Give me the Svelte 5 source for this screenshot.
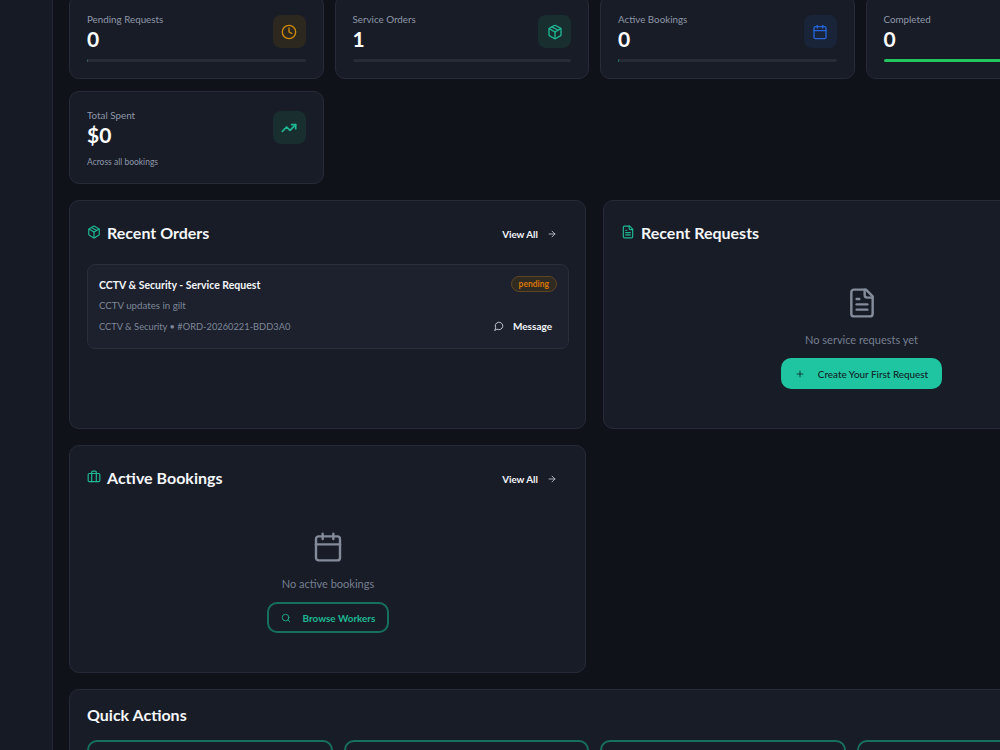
<script lang="ts">
  const stats = [
    { label: 'Pending Requests', value: '0', tone: 'amber', icon: 'clock', fill: 0.5 },
    { label: 'Service Orders', value: '1', tone: 'teal', icon: 'package', fill: 0 },
    { label: 'Active Bookings', value: '0', tone: 'blue', icon: 'calendar', fill: 0.5 },
    { label: 'Completed', value: '0', tone: 'green', icon: 'check', fill: 100 }
  ];
</script>

{#snippet icon(name: string)}
  <svg viewBox="0 0 24 24" fill="none" stroke="currentColor" stroke-width="2" stroke-linecap="round" stroke-linejoin="round" aria-hidden="true">
    {#if name === 'clock'}
      <circle cx="12" cy="12" r="10" /><path d="M12 6v6l4 2" />
    {:else if name === 'package'}
      <path d="M11 21.73a2 2 0 0 0 2 0l7-4A2 2 0 0 0 21 16V8a2 2 0 0 0-1-1.73l-7-4a2 2 0 0 0-2 0l-7 4A2 2 0 0 0 3 8v8a2 2 0 0 0 1 1.73z" /><path d="M12 22V12" /><path d="M3.29 7 12 12l8.71-5" /><path d="m7.5 4.27 9 5.15" />
    {:else if name === 'calendar'}
      <path d="M8 2v4" /><path d="M16 2v4" /><rect x="3" y="4" width="18" height="18" rx="2" /><path d="M3 10h18" />
    {:else if name === 'trending'}
      <path d="M22 7 13.5 15.5 8.5 10.5 2 17" stroke-width="2.6" /><path d="M16 7h6v6" stroke-width="2.6" />
    {:else if name === 'file'}
      <path d="M15 2H6a2 2 0 0 0-2 2v16a2 2 0 0 0 2 2h12a2 2 0 0 0 2-2V7z" /><path d="M14 2v4a2 2 0 0 0 2 2h4" /><path d="M10 9H8" /><path d="M16 13H8" /><path d="M16 17H8" />
    {:else if name === 'briefcase'}
      <path d="M16 20V4a2 2 0 0 0-2-2h-4a2 2 0 0 0-2 2v16" /><rect x="2" y="6" width="20" height="14" rx="2" />
    {:else if name === 'message'}
      <path d="M7.9 20A9 9 0 1 0 4 16.1L2 22z" />
    {:else if name === 'arrow'}
      <path d="M5 12h14" /><path d="m12 5 7 7-7 7" />
    {:else if name === 'plus'}
      <path d="M5 12h14" /><path d="M12 5v14" />
    {:else if name === 'search'}
      <circle cx="11" cy="11" r="8" /><path d="m21 21-4.3-4.3" />
    {:else if name === 'check'}
      <path d="M21.8 10A10 10 0 1 1 17 3.3" /><path d="m9 11 3 3L22 4" />
    {/if}
  </svg>
{/snippet}

<div class="shell">
  <aside class="sidebar"></aside>

  <main class="content">
    <section class="stats">
      {#each stats as s}
        <div class="card stat">
          <div class="stat-top">
            <div>
              <p class="stat-label">{s.label}</p>
              <p class="stat-value">{s.value}</p>
            </div>
            <span class="stat-icon {s.tone}">{@render icon(s.icon)}</span>
          </div>
          <div class="bar"><div class="bar-fill {s.tone}" style="width: {s.fill}%"></div></div>
        </div>
      {/each}

      <div class="card stat spent">
        <div class="stat-top">
          <div>
            <p class="stat-label">Total Spent</p>
            <p class="stat-value">$0</p>
          </div>
          <span class="stat-icon teal">{@render icon('trending')}</span>
        </div>
        <p class="stat-note">Across all bookings</p>
      </div>
    </section>

    <section class="panels">
      <div class="card panel">
        <header class="panel-head">
          <h2><span class="head-icon">{@render icon('package')}</span>Recent Orders</h2>
          <a class="view-all" href="#orders">View All <span class="arrow">{@render icon('arrow')}</span></a>
        </header>
        <div class="order">
          <div class="order-row">
            <h3>CCTV &amp; Security - Service Request</h3>
            <span class="badge">pending</span>
          </div>
          <p class="order-desc">CCTV updates in gilt</p>
          <div class="order-row meta">
            <span>CCTV &amp; Security • #ORD-20260221-BDD3A0</span>
            <button class="msg"><span class="msg-icon">{@render icon('message')}</span>Message</button>
          </div>
        </div>
      </div>

      <div class="card panel">
        <header class="panel-head">
          <h2><span class="head-icon">{@render icon('file')}</span>Recent Requests</h2>
        </header>
        <div class="empty requests">
          <span class="empty-icon">{@render icon('file')}</span>
          <p>No service requests yet</p>
          <button class="btn-solid"><span class="btn-icon">{@render icon('plus')}</span>Create Your First Request</button>
        </div>
      </div>

      <div class="card panel short">
        <header class="panel-head">
          <h2><span class="head-icon">{@render icon('briefcase')}</span>Active Bookings</h2>
          <a class="view-all" href="#bookings">View All <span class="arrow">{@render icon('arrow')}</span></a>
        </header>
        <div class="empty">
          <span class="empty-icon">{@render icon('calendar')}</span>
          <p>No active bookings</p>
          <button class="btn-outline"><span class="btn-icon">{@render icon('search')}</span>Browse Workers</button>
        </div>
      </div>
    </section>

    <section class="card quick">
      <h2>Quick Actions</h2>
      <div class="quick-grid">
        <div class="quick-item"></div>
        <div class="quick-item"></div>
        <div class="quick-item"></div>
        <div class="quick-item"></div>
      </div>
    </section>
  </main>
</div>

<style>
  :global(body) {
    margin: 0;
    background: #0f1219;
    overflow: hidden;
    font-family: Lato, "Noto Sans", sans-serif;
  }

  .shell {
    display: flex;
    width: 1136px;
    height: 750px;
    overflow: hidden;
    background: #0f1219;
  }

  .sidebar {
    width: 52px;
    flex-shrink: 0;
    background: #161a24;
    border-right: 1px solid #232733;
  }

  /* page is scrolled a little, so the first row is cut off at the top */
  .content {
    flex: 1;
    min-width: 0;
    margin-top: -5px;
    padding: 0 16px;
  }

  p, h2, h3 {
    margin: 0;
  }

  .card {
    box-sizing: border-box;
    background: #181c27;
    border: 1px solid #272b38;
    border-radius: 10px;
  }

  /* --- Stat cards --- */
  .stats {
    display: grid;
    grid-template-columns: repeat(4, 1fr);
    gap: 12px 11px;
  }

  .stat {
    padding: 16px 17px;
    height: 84px;
  }

  .stat.spent {
    height: 93px;
  }

  .stat-top {
    display: flex;
    justify-content: space-between;
    align-items: flex-start;
  }

  .stat-label {
    font-size: 9.8px;
    line-height: 14px;
    color: #8e97a8;
  }

  .stat-value {
    font-size: 21px;
    line-height: 26px;
    font-weight: 700;
    color: #fff;
  }

  .stat-icon {
    width: 33px;
    height: 33px;
    border-radius: 8px;
    display: flex;
    align-items: center;
    justify-content: center;
    margin-top: 3px;
  }

  .stat-icon :global(svg) {
    width: 16px;
    height: 16px;
  }

  .stat-icon.amber { background: #2c2820; color: #cf8a0b; }
  .stat-icon.teal { background: #182e2f; color: #1fb894; }
  .stat-icon.blue { background: #1a2438; color: #2563d6; }
  .stat-icon.green { background: #172d24; color: #22c55e; }

  .bar {
    height: 3px;
    margin-top: 7px;
    border-radius: 2px;
    background: #272b36;
    overflow: hidden;
  }

  .bar-fill {
    height: 100%;
  }

  .bar-fill.amber { background: #3d6b62; }
  .bar-fill.teal { background: #1fb894; }
  .bar-fill.blue { background: #1f8a74; }
  .bar-fill.green { background: #22c55e; }

  .stat-note {
    margin-top: 8px;
    font-size: 8.5px;
    line-height: 12px;
    color: #8e97a8;
  }

  /* --- Panels --- */
  .panels {
    display: grid;
    grid-template-columns: repeat(2, 1fr);
    gap: 16px 17px;
    margin-top: 16px;
  }

  .panel {
    padding: 20px 16px 20px 17px;
    height: 229px;
  }

  .panel.short {
    height: 228px;
  }

  .panel-head {
    display: flex;
    align-items: center;
    justify-content: space-between;
    height: 24px;
  }

  .panel-head h2 {
    margin-top: -2px;
  }

  h2 {
    display: flex;
    align-items: center;
    font-size: 16px;
    font-weight: 700;
    color: #f4f6f9;
  }

  .head-icon {
    display: flex;
    color: #1fb894;
    margin-right: 6px;
  }

  .head-icon :global(svg) {
    width: 14px;
    height: 14px;
  }

  .view-all {
    display: flex;
    align-items: center;
    gap: 9px;
    margin-top: 2px;
    margin-right: 12px;
    font-size: 9.8px;
    font-weight: 700;
    color: #f1f3f7;
    text-decoration: none;
  }

  .arrow {
    display: flex;
    color: #c9ced8;
  }

  .arrow :global(svg) {
    width: 10px;
    height: 10px;
  }

  .order {
    box-sizing: border-box;
    height: 85px;
    margin-top: 19px;
    padding: 11px;
    background: #1d212d;
    border: 1px solid #2a2e3a;
    border-radius: 8px;
  }

  .order-row {
    display: flex;
    justify-content: space-between;
    align-items: center;
  }

  h3 {
    font-size: 10.5px;
    line-height: 18px;
    font-weight: 700;
    color: #f4f6f9;
  }

  .badge {
    padding: 0 7px;
    line-height: 14px;
    font-size: 8.5px;
    font-weight: 700;
    color: #d97706;
    background: #2f2a22;
    border: 1px solid #5f4520;
    border-radius: 8px;
    margin-top: -3px;
  }

  .order-desc {
    margin-top: 4px;
    font-size: 9.7px;
    line-height: 14px;
    color: #7e8798;
  }

  .meta {
    margin-top: 8px;
    font-size: 9.3px;
    color: #7e8798;
  }

  .msg {
    display: flex;
    align-items: center;
    gap: 9px;
    padding: 0 5px;
    background: none;
    border: none;
    font-family: inherit;
    font-size: 10px;
    font-weight: 700;
    color: #f1f3f7;
  }

  .msg-icon {
    display: flex;
    color: #dfe3ea;
  }

  .msg-icon :global(svg) {
    width: 10px;
    height: 10px;
  }

  /* --- Empty states --- */
  .empty {
    display: flex;
    flex-direction: column;
    align-items: center;
    margin-top: 41px;
  }

  .empty.requests {
    margin-top: 42px;
    margin-right: 1px;
  }

  .empty-icon {
    display: flex;
    color: #848c9b;
  }

  .empty-icon :global(svg) {
    width: 32px;
    height: 32px;
    stroke-width: 1.8;
  }

  .empty p {
    margin-top: 13px;
    font-size: 11px;
    line-height: 16px;
    color: #767f90;
  }

  .btn-solid,
  .btn-outline {
    display: flex;
    align-items: center;
    justify-content: center;
    box-sizing: border-box;
    height: 31px;
    margin-top: 10px;
    padding-bottom: 1px;
    border-radius: 10px;
    font-family: inherit;
    font-size: 9.9px;
  }

  .btn-solid {
    width: 161px;
    gap: 13px;
    background: #1fc4a0;
    border: none;
    font-weight: 500;
    color: #10252a;
  }

  .btn-outline {
    width: 122px;
    gap: 12px;
    background: transparent;
    border: 2px solid #17705f;
    font-weight: 700;
    color: #1fb894;
  }

  .btn-icon {
    display: flex;
  }

  .btn-icon :global(svg) {
    width: 10px;
    height: 10px;
  }

  /* --- Quick actions --- */
  .quick {
    margin-top: 16px;
    padding: 15px 17px;
    height: 120px;
  }

  .quick-grid {
    display: grid;
    grid-template-columns: repeat(4, 1fr);
    gap: 11px;
    margin-top: 16px;
  }

  .quick-item {
    height: 70px;
    border: 2px solid #17705f;
    border-radius: 10px;
  }
</style>
